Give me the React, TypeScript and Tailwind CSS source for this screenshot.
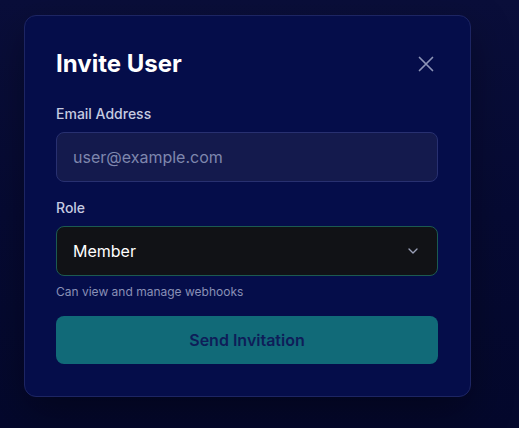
import React from "react";

export default function App() {
  return (
    <div
      className="w-[519px] h-[428px] overflow-hidden bg-gradient-to-b from-[#0a0e3a] via-[#060a33] to-[#04082c] pt-[15px] pl-[24px]"
      style={{ fontFamily: "Inter, 'Noto Sans', sans-serif" }}
    >
      <div className="w-[447px] rounded-xl border border-[#1d2563] bg-[#050d4a] pt-8 pb-8 pl-[31px] pr-8 shadow-[0_16px_40px_rgba(0,0,0,0.35)]">
        <div className="flex h-8 items-center justify-between">
          <h2 className="text-2xl leading-8 font-bold text-white">Invite User</h2>
          <button className="flex h-6 w-6 items-center justify-center text-[#8d94b6]">
            <svg width="16" height="16" viewBox="0 0 16 16" fill="none" stroke="currentColor" strokeWidth="1.7" strokeLinecap="round">
              <path d="M1.5 1.5 14.5 14.5M14.5 1.5 1.5 14.5" />
            </svg>
          </button>
        </div>

        <div className="mt-6">
          <label className="block text-sm leading-5 font-medium text-[#c6cbe0]">Email Address</label>
          <div className="mt-2 flex h-[50px] items-center rounded-lg border border-[#283070] bg-[#141a4d] px-4">
            <span className="text-base text-[#7f87ae]">user@example.com</span>
          </div>
        </div>

        <div className="mt-4">
          <label className="block text-sm leading-5 font-medium text-[#c6cbe0]">Role</label>
          <div className="mt-2 flex h-[50px] items-center justify-between rounded-lg border border-[#1c5a50] bg-[#111216] pl-4 pr-4">
            <span className="text-base text-white">Member</span>
            <svg width="16" height="16" viewBox="0 0 24 24" fill="none" stroke="#9aa0b8" strokeWidth="2" strokeLinecap="round" strokeLinejoin="round">
              <path d="m6 9 6 6 6-6" />
            </svg>
          </div>
          <p className="mt-2 text-xs leading-4 text-[#8990b6]">Can view and manage webhooks</p>
        </div>

        <button className="mt-4 flex h-12 w-full items-center justify-center rounded-lg bg-[#116a78] text-base font-semibold text-[#0e1d58]">
          Send Invitation
        </button>
      </div>
    </div>
  );
}
